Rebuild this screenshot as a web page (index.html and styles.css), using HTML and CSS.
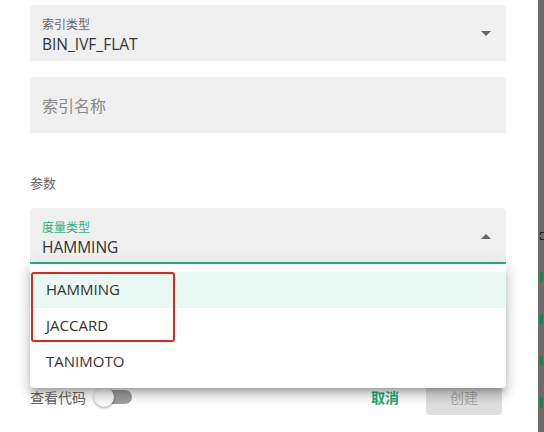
FILE: index.html
```html
<!DOCTYPE html>
<html lang="zh">

<head>
    <meta charset="UTF-8">
    <meta name="viewport" content="width=device-width, initial-scale=1.0">
    <title>创建索引</title>
    <link rel="stylesheet" href="styles.css">
</head>

<body>
    <div class="page">
        <div class="dialog">
            <div class="field">
                <div class="field-label">索引类型</div>
                <div class="field-value">BIN_IVF_FLAT</div>
                <span class="arrow arrow-down"></span>
            </div>

            <div class="field field-empty">
                <div class="placeholder">索引名称</div>
            </div>

            <div class="section-title">参数</div>

            <div class="select-wrap">
                <div class="field field-active">
                    <div class="field-label">度量类型</div>
                    <div class="field-value">HAMMING</div>
                    <span class="arrow arrow-up"></span>
                </div>

                <!-- open dropdown -->
                <ul class="menu">
                    <li class="menu-item selected">HAMMING</li>
                    <li class="menu-item">JACCARD</li>
                    <li class="menu-item">TANIMOTO</li>
                </ul>
                <div class="highlight-box"></div>
            </div>

            <div class="footer">
                <span class="code-label">查看代码</span>
                <span class="switch"><span class="switch-thumb"></span></span>
                <span class="spacer"></span>
                <button class="btn-text">取消</button>
                <button class="btn-create" disabled>创建</button>
            </div>
        </div>

        <div class="sidebar">
            <span class="mark mark-dash"></span>
            <span class="mark"></span>
            <span class="mark"></span>
            <span class="mark"></span>
            <span class="mark"></span>
        </div>
    </div>
</body>

</html>
```

FILE: styles.css
```css
/* base */
body {
    margin: 0;
    background: #fff;
    font-family: "Open Sans", "Noto Sans CJK SC", sans-serif;
    color: #333;
}

.page {
    display: flex;
    height: 432px;
    overflow: hidden;
}

.dialog {
    width: 476px;
    padding: 5px 32px 0 30px;
    display: flex;
    flex-direction: column;
}

/* filled text fields */
.field {
    position: relative;
    height: 56px;
    box-sizing: border-box;
    padding: 12px 12px 0 12px;
    background-color: #efefef;
    border-radius: 4px 4px 0 0;
}

.field-empty {
    margin-top: 16px;
    padding-top: 0;
    display: flex;
    align-items: center;
}

.field-label {
    font-size: 12px;
    line-height: 16px;
    color: #666;
}

.field-value {
    font-size: 15.5px;
    line-height: 22px;
    color: #333;
}

.placeholder {
    font-size: 16px;
    color: #888;
}

.field-active {
    border-bottom: 2px solid #1fb582;
}

.field-active .field-label {
    color: #1fb582;
}

.arrow {
    position: absolute;
    right: 15px;
    top: 26px;
    width: 0;
    height: 0;
    border-left: 5px solid transparent;
    border-right: 5px solid transparent;
}

.arrow-down {
    border-top: 5px solid #666;
}

.arrow-up {
    border-bottom: 5px solid #666;
}

.section-title {
    margin-top: 42px;
    font-size: 13px;
    line-height: 16px;
    color: #666;
}

.select-wrap {
    position: relative;
    margin-top: 17px;
}

/* dropdown menu */
.menu {
    position: absolute;
    left: 0;
    right: 0;
    top: 56px;
    margin: 0;
    padding: 8px 0;
    list-style: none;
    background: #fff;
    border-radius: 0 0 4px 4px;
    z-index: 2;
    box-shadow: 0 5px 5px -3px rgba(0, 0, 0, .2), 0 8px 10px 1px rgba(0, 0, 0, .14), 0 3px 14px 2px rgba(0, 0, 0, .12);
}

.menu-item {
    height: 36px;
    line-height: 35px;
    padding: 0 16px;
    font-size: 15px;
    color: #333;
}

.menu-item.selected {
    background-color: #e9f8f2;
}

.highlight-box {
    position: absolute;
    left: 1px;
    top: 64px;
    width: 140px;
    height: 66px;
    border: 2px solid #e4231e;
    border-radius: 3px;
    z-index: 3;
}

/* footer */
.footer {
    margin-top: 115px;
    display: flex;
    align-items: center;
    height: 36px;
}

.code-label {
    font-size: 14px;
    color: #666;
}

.switch {
    position: relative;
    margin-left: 10px;
    width: 36px;
    height: 14px;
    border-radius: 7px;
    background-color: #9e9e9e;
}

.switch-thumb {
    position: absolute;
    left: -2px;
    top: -3px;
    width: 20px;
    height: 20px;
    border-radius: 50%;
    background: #fafafa;
    box-shadow: 0 1px 3px rgba(0, 0, 0, .4);
}

.spacer {
    flex: 1;
}

button {
    font-family: inherit;
    border: none;
    cursor: pointer;
}

.btn-text {
    background: none;
    color: #1aaf78;
    font-weight: bold;
    font-size: 14px;
    padding: 0;
    margin-right: 27px;
}

.btn-create {
    width: 76px;
    height: 36px;
    margin-right: 4px;
    border-radius: 4px;
    background-color: #dedede;
    color: #a5a5a5;
    font-size: 14px;
}

/* page behind the dialog */
.sidebar {
    margin-left: auto;
    width: 6px;
    background-color: #6c6c6c;
    display: flex;
    flex-direction: column;
    gap: 32px;
    padding-top: 232px;
}

.mark {
    width: 3px;
    height: 10px;
    margin-left: 2px;
    background-color: #2c7a52;
}

.mark-dash {
    height: 6px;
    width: 4px;
    background: none;
    border: 1px dashed #222;
}
```
